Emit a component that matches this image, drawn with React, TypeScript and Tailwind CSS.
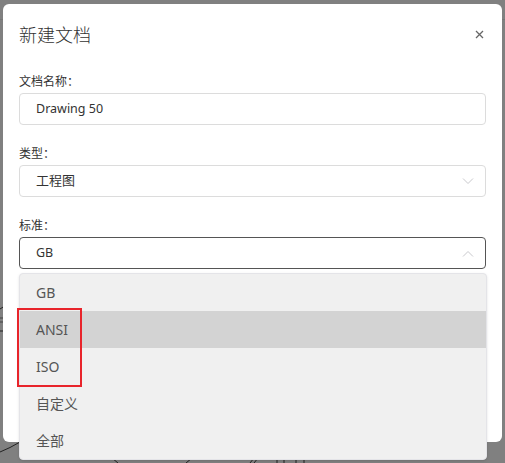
import { useState } from "react";

const font = { fontFamily: '"Noto Sans", "Noto Sans CJK SC", sans-serif' };

const standards = ["GB", "ANSI", "ISO", "自定义", "全部"];

function Chevron({ up = false }: { up?: boolean }) {
  return (
    <svg width="12" height="7" viewBox="0 0 12 7" fill="none">
      <path
        d={up ? "M1 6.5L6 1.5L11 6.5" : "M1 0.5L6 5.5L11 0.5"}
        stroke="#c8c8cc"
        strokeWidth="1"
      />
    </svg>
  );
}

function Field({ label, children }: { label: string; children: React.ReactNode }) {
  return (
    <div className="flex flex-col">
      <div className="h-5 text-[12px] leading-5 text-[#333]">{label}</div>
      <div className="mt-px">{children}</div>
    </div>
  );
}

export default function App() {
  const [hover] = useState(1);
  return (
    <div
      className="relative h-[463px] w-[505px] overflow-hidden bg-[#808080]"
      style={font}
    >
      {/* drawing behind the overlay */}
      <svg className="absolute inset-0" width="505" height="463" fill="none">
        <line x1="0" y1="19.5" x2="505" y2="19.5" stroke="#767676" />
        <path d="M0 309 Q6 305 10 303" stroke="#222" strokeWidth="1" />
        <path d="M0 331 L12 331" stroke="#222" strokeWidth="1" />
        <path d="M0 318 L6 318 M0 322 L6 322" stroke="#333" strokeWidth="0.8" />
        <path d="M0 452 Q10 448 20 442" stroke="#222" strokeWidth="1" />
        <path d="M112 458 L118 463" stroke="#222" strokeWidth="1" />
        <path d="M186 463 L192 458" stroke="#222" strokeWidth="1" />
        <path d="M250 463 L254 458 M254 463 L258 458" stroke="#222" strokeWidth="1" />
        <path d="M277 456 L277 463 M284 456 L284 463 M296 456 L296 463 M304 456 L304 463" stroke="#222" strokeWidth="1" />
      </svg>

      <div className="relative ml-[3px] mt-[4px] h-[438px] w-[499px] rounded-md bg-white">
        <div className="flex h-[60px] items-start justify-between pl-4 pr-[18px] pt-[17px]">
          <div className="text-[18px] font-light leading-7 text-[#333]">新建文档</div>
          <svg className="mt-[9px]" width="9" height="9" viewBox="0 0 9 9">
            <path d="M1 1L8 8M8 1L1 8" stroke="#666" strokeWidth="1.3" />
          </svg>
        </div>

        <div className="flex flex-col gap-[19px] px-4 pt-[8px]">
          <Field label="文档名称：">
            <div className="flex h-8 items-center rounded border border-[#dcdcdc] px-4 text-[12.5px] text-[#333]">
              Drawing 50
            </div>
          </Field>
          <Field label="类型：">
            <div className="flex h-8 items-center justify-between rounded border border-[#dcdcdc] pl-4 pr-[11px] text-[13px] text-[#333]">
              工程图
              <Chevron />
            </div>
          </Field>
          <Field label="标准：">
            <div className="flex h-8 items-center justify-between rounded border border-[#555] pl-4 pr-[11px] text-[12.5px] text-[#333]">
              GB
              <Chevron up />
            </div>
          </Field>
        </div>
      </div>

      {/* open select menu */}
      <div className="absolute left-[19px] top-[273px] w-[468px] overflow-hidden rounded border border-[#e4e4e8] bg-[#f0f0f0] shadow-sm">
        {standards.map((s, i) => (
          <div
            key={s}
            className={`flex h-[37px] items-center px-4 text-[14px] text-[#555] ${
              i === hover ? "bg-[#d3d3d3]" : ""
            }`}
          >
            {s}
          </div>
        ))}
      </div>

      {/* annotation box */}
      <div className="absolute left-[17px] top-[308px] h-[79px] w-[65px] border-2 border-[#e8242b]" />
    </div>
  );
}
